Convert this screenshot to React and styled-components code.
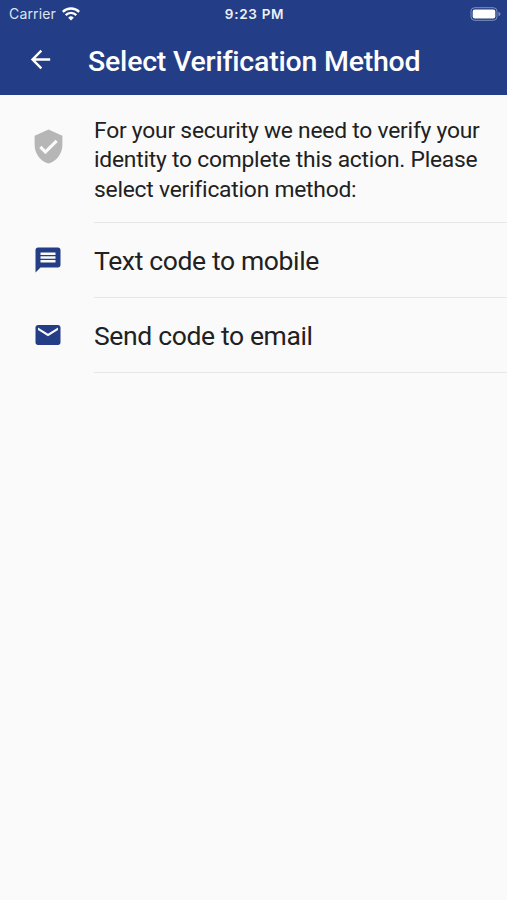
import React from 'react'
import styled, { createGlobalStyle } from 'styled-components'
import { MdArrowBack, MdMessage, MdEmail, MdVerifiedUser } from 'react-icons/md'

const GlobalStyle = createGlobalStyle`
  * {
    box-sizing: border-box;
  }
  body {
    margin: 0;
    background: #fafafa;
    font-family: Roboto, sans-serif;
    font-variant-ligatures: none;
    color: #212121;
  }
`

const Screen = styled.div`
  display: flex;
  flex-direction: column;
  height: 900px;
  overflow: hidden;
  background: #fafafa;
`

const Header = styled.header`
  height: 95px;
  background: #233e87;
  color: #fff;
`

const StatusBar = styled.div`
  display: grid;
  grid-template-columns: 1fr auto 1fr;
  align-items: center;
  height: 27px;
  padding: 0 6px 0 9px;
  font-family: Inter, sans-serif;
`

const Carrier = styled.div`
  display: flex;
  align-items: center;
  gap: 6px;
  font-size: 14px;
  letter-spacing: 0.15px;
  color: #dfe4f2;
`

const Clock = styled.div`
  margin-right: 1px;
  font-size: 13.5px;
  font-weight: 600;
  letter-spacing: 0.7px;
  color: #eef0f8;
`

const Battery = styled.svg`
  justify-self: end;
`

const Toolbar = styled.div`
  display: flex;
  align-items: center;
  height: 68px;
  padding-left: 26px;
`

const BackButton = styled.button`
  display: flex;
  width: 62px;
  padding: 0 0 3px;
  border: 0;
  background: none;
  color: #fff;
  font-size: 29px;
`

const Title = styled.h1`
  margin: 0;
  padding-top: 1px;
  font-size: 28.5px;
  font-weight: 500;
  letter-spacing: -0.22px;
  line-height: 34px;
  white-space: nowrap;
`

const Row = styled.div`
  display: flex;
  height: ${(props) => props.$height}px;
`

const IconCell = styled.div`
  display: flex;
  justify-content: center;
  flex: 0 0 94px;
  padding-top: ${(props) => props.$top}px;
  padding-left: ${(props) => (props.$muted ? 3 : 2)}px;
  color: ${(props) => (props.$muted ? '#b6b6b6' : '#233e87')};
  font-size: ${(props) => (props.$muted ? 37 : 30)}px;
`

const Content = styled.div`
  flex: 1;
  border-bottom: 1px solid #e6e6e6;
  white-space: nowrap;
`

const Message = styled.p`
  margin: 0;
  padding-top: 21px;
  font-size: 22.8px;
  letter-spacing: -0.22px;
  line-height: 29.3px;
`

const Label = styled.div`
  padding-top: 21px;
  font-size: 26.5px;
  letter-spacing: -0.36px;
  line-height: 34px;
`

const methods = [
  { label: 'Text code to mobile', icon: <MdMessage /> },
  { label: 'Send code to email', icon: <MdEmail /> },
]

function WifiIcon() {
  return (
    <svg width="18" height="14" viewBox="0 0 18 14" fill="none" stroke="#fff" strokeWidth="2.3">
      <path d="M0.8 4.9a11.6 11.6 0 0 1 16.4 0" />
      <path d="M3.7 8.1a7.5 7.5 0 0 1 10.6 0" />
      <path d="M9 13.5L6.2 10.7a4 4 0 0 1 5.6 0z" fill="#fff" stroke="none" />
    </svg>
  )
}

export default function App() {
  return (
    <Screen>
      <GlobalStyle />
      <Header>
        <StatusBar>
          <Carrier>
            Carrier
            <WifiIcon />
          </Carrier>
          <Clock>9:23 PM</Clock>
          <Battery width="31" height="14" viewBox="0 0 31 14">
            <rect x="1" y="0.7" width="26" height="12.6" rx="3.6" fill="none" stroke="#8190bb" />
            <rect x="2.7" y="2.4" width="22.6" height="9.2" rx="2" fill="#fff" />
            <path d="M28.5 4.8q2 .7 2 2.2t-2 2.2z" fill="#8190bb" />
          </Battery>
        </StatusBar>
        <Toolbar>
          <BackButton aria-label="Back">
            <MdArrowBack />
          </BackButton>
          <Title>Select Verification Method</Title>
        </Toolbar>
      </Header>
      <Row $height={128}>
        <IconCell $top={33} $muted>
          <MdVerifiedUser />
        </IconCell>
        <Content>
          <Message>
            For your security we need to verify your
            <br />
            identity to complete this action. Please
            <br />
            select verification method:
          </Message>
        </Content>
      </Row>
      {methods.map((method) => (
        <Row key={method.label} $height={75}>
          <IconCell $top={21.5}>{method.icon}</IconCell>
          <Content>
            <Label>{method.label}</Label>
          </Content>
        </Row>
      ))}
    </Screen>
  )
}
